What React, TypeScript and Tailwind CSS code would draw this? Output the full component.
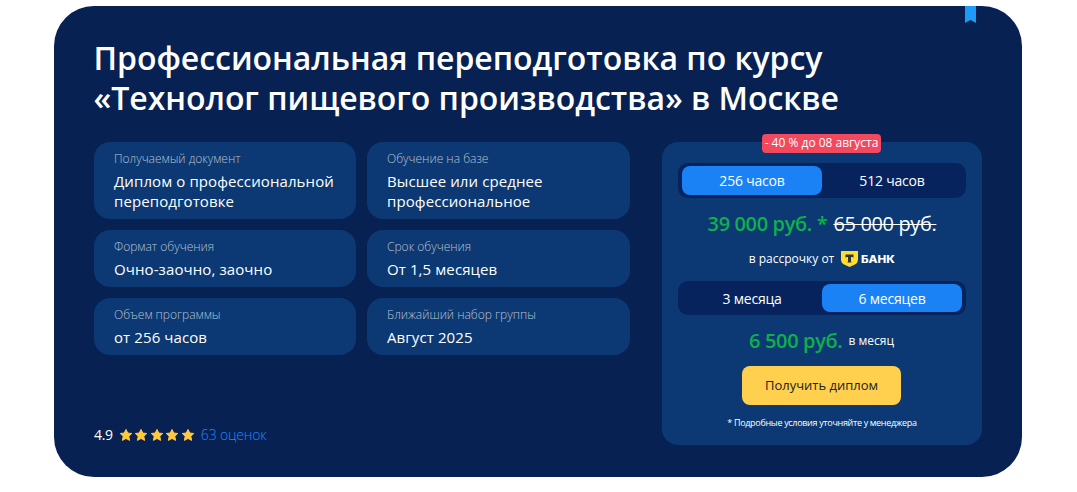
import React from 'react';
import { clsx } from 'clsx';

const facts = [
  { label: 'Получаемый документ', value: 'Диплом о профессиональной переподготовке' },
  { label: 'Обучение на базе', value: 'Высшее или среднее профессиональное' },
  { label: 'Формат обучения', value: 'Очно-заочно, заочно' },
  { label: 'Срок обучения', value: 'От 1,5 месяцев' },
  { label: 'Объем программы', value: 'от 256 часов' },
  { label: 'Ближайший набор группы', value: 'Август 2025' },
];

function Star() {
  return (
    <svg viewBox="0 0 14 14" className="w-3.5 h-3.5" fill="#ffc83d">
      <path
        d="M7 1.4l1.75 3.6 4 .5-2.95 2.75.8 4.15L7 10.4l-3.6 2 .8-4.150L1.250 5.500l4-.5z"
        stroke="#ffc83d"
        strokeWidth="1"
        strokeLinejoin="round"
      />
    </svg>
  );
}

function BankLogo() {
  return (
    <span className="flex items-center">
      <svg viewBox="0 0 17 16" className="w-[17px] h-4">
        <path d="M0 0h17v8.2c0 2.3-1.2 4.3-3.2 5.4L8.5 16l-5.3-2.4C1.2 12.5 0 10.5 0 8.2z" fill="#ffdd2d" />
        <path d="M4.5 3.6v3.2c.4-.4 1-.7 1.6-.7h.9v3.4c0 .9-.2 1.5-.6 1.9h4.200c-.4-.4-.6-1-.6-1.900V6.100h.9c.6 0 1.200.3 1.600.7V3.600z" fill="#333" />
      </svg>
      <span className="ml-[3px] w-[34px] text-[10px] leading-4 font-extrabold font-['Inter',sans-serif] origin-left scale-x-[1.17]">
        БАНК
      </span>
    </span>
  );
}

function Switcher({ items, active, className }: { items: string[]; active: number; className?: string }) {
  return (
    <div className={clsx('flex w-72 px-1 py-[3px] rounded-[10px] bg-[#07235d]', className)}>
      {items.map((item, idx) => (
        <button
          key={item}
          className={clsx(
            'flex-1 rounded-lg text-sm leading-[29px] tracking-[-0.2px]',
            idx === active && 'bg-[#1a82f5]',
          )}
        >
          {item}
        </button>
      ))}
    </div>
  );
}

export default function App() {
  return (
    <div className="h-[492px] pt-1.5 bg-white font-['Open_Sans',sans-serif] text-white">
      <section className="relative ml-[54px] w-[968px] h-[471px] px-10 pt-8 rounded-[40px] bg-[#072153]">
        {/* Bookmark */}
        <svg viewBox="0 0 11 17" className="absolute top-0 right-[46px] w-[11px] h-[17px]" fill="#1e9bf7">
          <path d="M0 0h11v17l-5.5-3L0 17z" />
        </svg>

        <h1 className="-ml-[0.5px] text-[32px] leading-10 font-semibold tracking-[-0.04px]">
          Профессиональная переподготовка по курсу
          <br />
          «Технолог пищевого производства» в Москве
        </h1>

        <div className="mt-6 flex justify-between">
          <div className="flex flex-col justify-between w-[536px]">
            <div className="grid grid-cols-[262px_263px] gap-[11px]">
              {facts.map((fact) => (
                <div key={fact.label} className="pl-5 pr-[19px] pt-2 pb-2 rounded-2xl bg-[#0c3973]">
                  <p className="text-xs leading-[18px] font-light text-[#b9c1cd]">{fact.label}</p>
                  <p className="mt-[3px] -mr-2 text-[15px] leading-5 font-medium tracking-[0.1px]">{fact.value}</p>
                </div>
              ))}
            </div>

            <div className="flex items-center text-sm leading-5">
              <span className="tracking-[-0.3px]">4.9</span>
              <div className="flex ml-1.5 gap-[1.5px]">
                {[0, 1, 2, 3, 4].map((n) => (
                  <Star key={n} />
                ))}
              </div>
              <span className="ml-1.5 font-light tracking-[-0.15px] text-[#1f87ff]">63 оценок</span>
            </div>
          </div>

          {/* Price */}
          <div className="relative flex flex-col items-center w-80 h-[303px] pt-[21px] rounded-2xl bg-[#0c3973]">
            <span className="absolute -top-2 left-[100px] w-[119px] h-[19px] rounded bg-[#f2495f] text-center text-xs leading-[18px] whitespace-nowrap">
              - 40 % до 08 августа
            </span>

            <Switcher items={['256 часов', '512 часов']} active={0} className="h-[35px]" />

            <div className="mt-[11px] flex gap-1.5 text-xl leading-[30px] tracking-[-0.36px]">
              <span className="font-semibold text-[#0cb14b]">39 000 руб. *</span>
              <span className="line-through decoration-1">65 000 руб.</span>
            </div>

            <div className="mt-[11px] flex items-center gap-[7px] text-xs leading-[18px]">
              <span>в рассрочку от</span>
              <BankLogo />
            </div>

            <Switcher items={['3 месяца', '6 месяцев']} active={1} className="mt-[13px] h-[34px]" />

            <div className="mt-[11px] mr-px flex items-center gap-1.5">
              <span className="text-xl leading-[30px] font-semibold tracking-[-0.36px] text-[#0cb14b]">6 500 руб.</span>
              <span className="text-xs">в месяц</span>
            </div>

            <button className="mt-2.5 mr-px w-[159px] h-[39px] rounded-lg bg-[#ffd04e] text-[13px] text-[#222]">
              Получить диплом
            </button>
            <p className="mt-[11px] text-[9px] leading-[14px] tracking-[-0.32px]">* Подробные условия уточняйте у менеджера</p>
          </div>
        </div>
      </section>
    </div>
  );
}
